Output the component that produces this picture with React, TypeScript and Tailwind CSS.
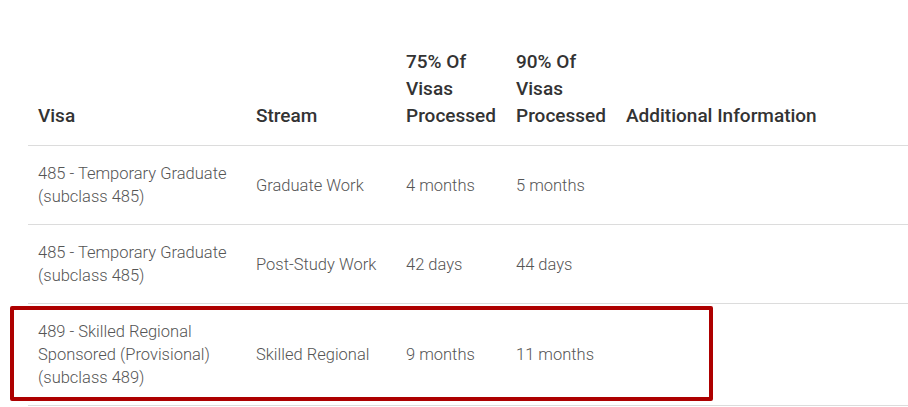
const rows = [
  {
    visa: ['485 - Temporary Graduate', '(subclass 485)'],
    stream: 'Graduate Work',
    p75: '4 months',
    p90: '5 months',
  },
  {
    visa: ['485 - Temporary Graduate', '(subclass 485)'],
    stream: 'Post-Study Work',
    p75: '42 days',
    p90: '44 days',
  },
  {
    visa: ['489 - Skilled Regional', 'Sponsored (Provisional)', '(subclass 489)'],
    stream: 'Skilled Regional',
    p75: '9 months',
    p90: '11 months',
  },
]

export default function App() {
  return (
    <div className="relative w-[908px] h-[407px] overflow-hidden bg-white font-['Roboto',sans-serif] pl-[28px] pt-[48px]">
      <table className="w-[900px] table-fixed border-collapse text-left">
        <colgroup>
          <col className="w-[218px]" />
          <col className="w-[150px]" />
          <col className="w-[110px]" />
          <col className="w-[110px]" />
          <col />
        </colgroup>
        <thead>
          <tr className="border-b border-[#dcdcdc]">
            {['Visa', 'Stream', '75% Of Visas Processed', '90% Of Visas Processed', 'Additional Information'].map((h) => (
              <th
                key={h}
                className="align-bottom px-[10px] pb-[16px] pt-0 text-[19px] leading-[27px] font-medium text-[#333]"
              >
                {h}
              </th>
            ))}
          </tr>
        </thead>
        <tbody>
          {rows.map((r, i) => (
            <tr key={i} className="border-b border-[#dcdcdc] text-[16.5px] leading-[23px] font-light text-[#555]">
              <td className="px-[10px] py-[16px] align-middle">
                {r.visa.map((l) => (
                  <div key={l}>{l}</div>
                ))}
              </td>
              <td className="px-[10px] py-[16px] align-middle">{r.stream}</td>
              <td className="px-[10px] py-[16px] align-middle">{r.p75}</td>
              <td className="px-[10px] py-[16px] align-middle">{r.p90}</td>
              <td className="px-[10px] py-[16px] align-middle"></td>
            </tr>
          ))}
        </tbody>
      </table>

      {/* highlight around the 489 row */}
      <div className="absolute left-[10px] top-[306px] w-[703px] h-[95px] border-[4px] border-[#ad0000] rounded-[2px]" />
    </div>
  )
}
